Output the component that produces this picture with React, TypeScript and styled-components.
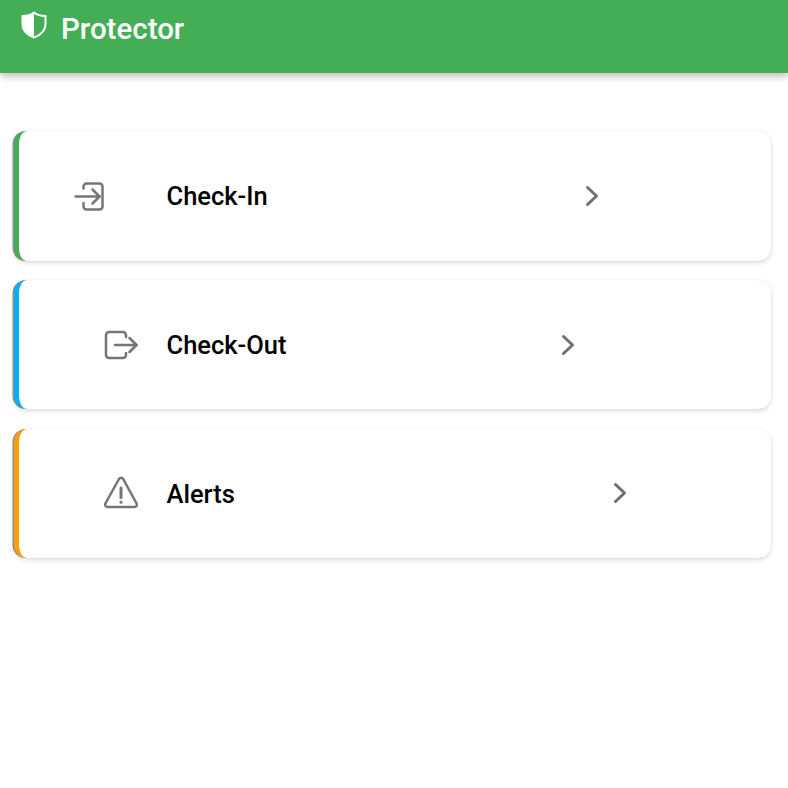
import { ReactNode } from "react";
import styled, { createGlobalStyle } from "styled-components";

const GlobalStyle = createGlobalStyle`
  html, body {
    margin: 0;
    padding: 0;
    height: 100%;
    background: #fff;
    font-family: Roboto, "Liberation Sans", sans-serif;
  }
`;

const Page = styled.div`
  min-height: 788px;
  background: #fff;
`;

const Header = styled.header`
  height: 73px;
  display: flex;
  align-items: flex-start;
  gap: 13px;
  padding-left: 20px;
  background: #43ae55;
  box-shadow: 0 3px 8px rgba(0, 0, 0, 0.28);
`;

const Logo = styled.svg`
  width: 28px;
  height: 28px;
  margin-top: 11px;
  flex: none;
`;

const Title = styled.h1`
  margin: 12px 0 0;
  color: #fff;
  font-size: 29.5px;
  line-height: 35px;
  font-weight: 500;
`;

const List = styled.main`
  display: flex;
  flex-direction: column;
  gap: 19.25px;
  padding: 58px 17px 0 13.5px;
`;

const Card = styled.section<{ $accent: string }>`
  height: 129.5px;
  display: flex;
  align-items: center;
  box-sizing: border-box;
  border-left: 5.5px solid ${(props) => props.$accent};
  border-radius: 13px;
  background: #fff;
  box-shadow:
    -1.5px 0 0.5px rgba(90, 90, 90, 0.65),
    0 2px 5px rgba(0, 0, 0, 0.14),
    0 0 2px rgba(0, 0, 0, 0.04);
`;

const IconSlot = styled.div<{ $inset: number }>`
  width: 148px;
  box-sizing: border-box;
  padding-left: ${(props) => props.$inset}px;
  display: flex;
  flex: none;
`;

const Label = styled.span<{ $width: number }>`
  width: ${(props) => props.$width}px;
  flex: none;
  padding-top: 2px;
  color: #000;
  font-size: 25.5px;
  line-height: 31px;
  font-weight: 500;
`;

const Chevron = styled.svg`
  width: 14px;
  height: 22px;
  flex: none;
`;

const Glyph = styled.svg`
  width: 34px;
  height: 34px;
  display: block;
  fill: none;
  stroke: #757575;
  stroke-width: 2.5;
  stroke-linecap: round;
  stroke-linejoin: round;
`;

const CheckInIcon = () => (
  <Glyph viewBox="0 0 34 34">
    <path d="M9.5 9.5V7.5A3 3 0 0 1 12.5 4.5H25.5A3 3 0 0 1 28.5 7.5V27.5A3 3 0 0 1 25.5 30.5H12.5A3 3 0 0 1 9.5 27.5V24" />
    <path d="M1.5 17.5H25.5" />
    <path d="M18.5 10.5L25.5 17.5L18.5 24.5" />
  </Glyph>
);

const CheckOutIcon = () => (
  <Glyph viewBox="0 0 34 34">
    <path d="M22 9V7A3 3 0 0 0 19 4H5A3 3 0 0 0 2 7V27A3 3 0 0 0 5 30H19A3 3 0 0 0 22 27V25" />
    <path d="M11 17H32.5" />
    <path d="M25.5 10L32.5 17L25.5 24" />
  </Glyph>
);

const AlertIcon = () => (
  <Glyph viewBox="0 0 34 34">
    <path d="M15 3A2.4 2.4 0 0 1 19.2 3L32.6 27.5A2.4 2.4 0 0 1 30.5 31H3.5A2.4 2.4 0 0 1 1.4 27.5Z" />
    <path d="M17 12V21.5" strokeWidth="3" />
    <path d="M17 26V26.2" strokeWidth="3" />
  </Glyph>
);

type Row = {
  label: string;
  accent: string;
  inset: number;
  labelWidth: number;
  icon: ReactNode;
};

const rows: Row[] = [
  { label: "Check-In", accent: "#43ae55", inset: 55, labelWidth: 418, icon: <CheckInIcon /> },
  { label: "Check-Out", accent: "#03b0f5", inset: 85, labelWidth: 394, icon: <CheckOutIcon /> },
  { label: "Alerts", accent: "#ff9d0a", inset: 85, labelWidth: 446, icon: <AlertIcon /> },
];

export default function App() {
  return (
    <Page>
      <GlobalStyle />
      <Header>
        <Logo viewBox="0 0 28 28">
          <path
            d="M14 1.5C17 4 21 5 25.5 5V13C25.5 19.5 20.5 24.5 14 26.5C7.5 24.5 2.5 19.5 2.5 13V5C7 5 11 4 14 1.5Z"
            fill="none"
            stroke="#fff"
            strokeWidth="2"
            strokeLinejoin="round"
          />
          <path d="M14 1.5V26.5C7.5 24.5 2.5 19.5 2.5 13V5C7 5 11 4 14 1.5Z" fill="#fff" />
        </Logo>
        <Title>Protector</Title>
      </Header>
      <List>
        {rows.map((row) => (
          <Card key={row.label} $accent={row.accent}>
            <IconSlot $inset={row.inset}>{row.icon}</IconSlot>
            <Label $width={row.labelWidth}>{row.label}</Label>
            <Chevron viewBox="0 0 14 22">
              <path
                d="M2.5 2.5L11.5 11L2.5 19.5"
                fill="none"
                stroke="#6f6f6f"
                strokeWidth="3"
                strokeLinecap="round"
                strokeLinejoin="round"
              />
            </Chevron>
          </Card>
        ))}
      </List>
    </Page>
  );
}
